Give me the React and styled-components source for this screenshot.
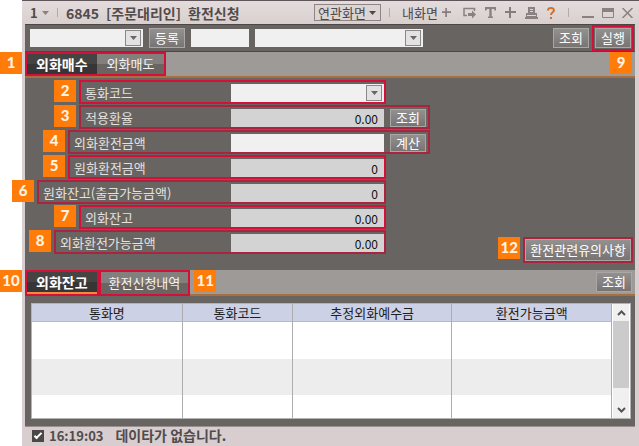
import React from "react";
import styled, { createGlobalStyle, css } from "styled-components";

const RED = "#d40f38";
const DEEP_RED = "#a8243f";
const PANEL = "#686462";
const FONT = '"Noto Sans CJK KR", "Noto Sans", sans-serif';

const GlobalStyle = createGlobalStyle`
  *, *::before, *::after { box-sizing: border-box; }
  body { margin: 0; background: #fff; font-family: ${FONT}; font-size: 13px; line-height: 16px; }
  button, input, select { font: inherit; margin: 0; border-radius: 0; }
`;

const Page = styled.div`
  padding-left: 22px;
`;

const Window = styled.main`
  background: #d8cecf;
  border-top: 1px solid #5f5558;
`;

const TitleBar = styled.header`
  display: flex;
  align-items: center;
  height: 23px;
  padding: 0 6px 0 8px;
  color: #524b4c;
  background: linear-gradient(#e4dcdc, #d9cfcf);
`;

const TitleNumber = styled.span`
  font-weight: 700;
  width: 12px;
`;

const Title = styled.h1`
  display: flex;
  gap: 7px;
  margin: 0;
  font-size: 14px;
  line-height: 20px;
  font-weight: 700;
  white-space: nowrap;
`;

const Divider = styled.span`
  width: 1px;
  height: 9px;
  margin: 0 ${(p) => p.$gap || 8}px;
  background: #b5abac;
`;

const Tools = styled.div`
  display: flex;
  align-items: center;
  margin-left: auto;
`;

const ToolGroup = styled.div`
  display: flex;
  align-items: center;
  gap: ${(p) => p.$gap}px;
`;

const PlainButton = styled.button`
  display: flex;
  align-items: center;
  gap: 4px;
  padding: 0;
  border: 0;
  background: none;
  color: #8b8182;
`;

const TextTool = styled(PlainButton)`
  margin-left: 4px;
  margin-right: 12px;
  color: #4f4849;
  white-space: nowrap;
`;

const RelatedButton = styled(PlainButton)`
  height: 17px;
  width: 67px;
  padding: 0 3px;
  gap: 3px;
  line-height: 14px;
  border: 1px solid #8d8586;
  color: #4f4849;
  background: #dcd5d4;
  white-space: nowrap;
`;

const Body = styled.div`
  margin: 0 4px 0 3px;
  background: ${PANEL};
  border-bottom: 1px solid #9a9090;
`;

const Toolbar = styled.div`
  display: flex;
  align-items: center;
  gap: 6px;
  height: 28px;
  padding: 0 1px 0 5px;
  border-top: 1px solid #4b4746;
  border-bottom: 1px solid #4b4746;
`;

const Spacer = styled.div`
  flex: 1;
`;

const textBox = css`
  width: ${(p) => p.$width}px;
  height: 18px;
  padding: 0 6px;
  border: 0;
  outline: 0;
  background: ${(p) => (p.readOnly ? "#d3d3d3" : "#f0f0f0")};
  color: #111;
`;

const TextInput = styled.input`
  ${textBox}
  text-align: right;
  font-size: 12px;
`;

const SelectWrap = styled.span`
  display: flex;
  position: relative;
  width: ${(p) => p.$width}px;
`;

const NativeSelect = styled.select`
  ${textBox}
  width: 100%;
  appearance: none;
`;

const Arrow = styled.span`
  position: absolute;
  top: 1px;
  right: 2px;
  display: grid;
  place-items: center;
  width: 16px;
  height: 16px;
  border: 1px solid #8a8888;
  background: #e3e1e1;
  color: #666;
  pointer-events: none;
`;

const ActionButton = styled.button`
  height: ${(p) => p.$height || 20}px;
  padding: 0 5px;
  line-height: 16px;
  color: #fff;
  background: linear-gradient(#939090, #777473);
  border: 1px solid #aaa6a5;
  white-space: nowrap;
`;

const SmallButton = styled(ActionButton)`
  width: 36px;
`;

const Marked = styled.div`
  position: relative;
  display: flex;
  border: 2px solid ${(p) => (p.$deep ? DEEP_RED : RED)};
  padding: ${(p) => p.$pad || 0}px;
`;

const Badge = styled.span`
  flex: none;
  width: 22px;
  height: 22px;
  background: #ff7b0a;
  color: #fff3e2;
  font: 900 15px/21px Lato, sans-serif;
  text-align: center;
`;

const SideBadge = styled(Badge)`
  position: absolute;
  top: 0;
  right: 100%;
  margin: -2px 5px 0 0;
`;

const TabBar = styled.div`
  display: flex;
  align-items: center;
  height: 26px;
  padding-right: 3px;
  background: #9e9a98;
  border-bottom: 2px solid #a96f3f;
`;

const TabFrame = styled(Marked)`
  align-self: flex-start;
`;

const Tab = styled.button`
  height: ${(p) => p.$height}px;
  padding: 0 ${(p) => p.$side}px;
  border: 0;
  color: #f5f3f2;
  line-height: 18px;
  white-space: nowrap;
  background: linear-gradient(#827f7d 0 50%, #686563 50%);
  ${(p) =>
    p["aria-selected"] &&
    css`
      color: #fff;
      font-size: 14px;
      font-weight: 700;
      background: linear-gradient(#464443 0 50%, #373535 50%);
      border-bottom: ${p.$line ? "2px solid #f38a3a" : "0"};
    `}
`;

const TabBarBadge = styled(Badge)`
  margin: 0 0 2px 4px;
`;

const Form = styled.form`
  display: flex;
  align-items: flex-end;
  justify-content: space-between;
  padding: 2px 2px 7px 0;
`;

const Fields = styled.div`
  display: flex;
  flex-direction: column;
  align-items: flex-start;
  gap: 1px;
  padding-bottom: 9px;
`;

const FieldRow = styled(Marked)`
  align-items: center;
  height: 24px;
  margin-left: ${(p) => p.$indent}px;
  padding: ${(p) => (p.$button ? "2px 2px 0 4px" : "2px 0 0 4px")};
`;

const FieldLabel = styled.label`
  width: ${(p) => 200 - p.$indent}px;
  color: #e4e1df;
  line-height: 18px;
  white-space: nowrap;
`;

const FieldAction = styled(SmallButton)`
  margin-left: 6px;
`;

const NoticeButton = styled(ActionButton)`
  padding: 0 4px;
`;

const GridPanel = styled.div`
  padding: 7px 4px 7px 6px;
`;

const GridBox = styled.div`
  display: flex;
  background: #fff;
  border: 1px solid #b4b2b2;
`;

const Table = styled.table`
  flex: 1;
  table-layout: fixed;
  border-collapse: separate;
  border-spacing: 0;
`;

const HeadCell = styled.th`
  width: ${(p) => p.$width};
  height: 18px;
  padding: 0;
  font-weight: 400;
  line-height: 17px;
  color: #1d1d22;
  background: #cdd1e6;
  border-right: 1px solid #adacae;
  border-bottom: 1px solid #b8b8c0;
`;

const Cell = styled.td`
  height: ${(p) => p.$height}px;
  padding: 0;
  background: ${(p) => (p.$shade ? "#ededed" : "#fff")};
  border-right: 1px solid #adacae;
`;

const ScrollBar = styled.div`
  display: flex;
  flex-direction: column;
  align-items: stretch;
  width: 18px;
  padding: 0 1px;
  color: #555;
`;

const ScrollButton = styled.button`
  display: grid;
  place-items: center;
  height: 17px;
  padding: 0;
  border: 0;
  background: #f0f0f0;
  color: inherit;
`;

const Thumb = styled.div`
  flex: 1;
  background: #cbcbcb;
`;

const Track = styled.div`
  height: 13px;
  background: #f0f0f0;
`;

const Status = styled.footer`
  padding: 0 10px;
  height: 20px;
`;

const StatusLabel = styled.label`
  display: flex;
  align-items: center;
  gap: 5px;
  font-size: 13px;
  line-height: 17px;
  font-weight: 700;
  color: #524b4b;
`;

const Message = styled.span`
  margin-left: 7px;
  font-size: 14px;
`;

const Check = styled.input`
  appearance: none;
  width: 12px;
  height: 12px;
  background: #4c4848;
  display: grid;
  place-items: center;
  &:checked::after {
    content: "";
    width: 8px;
    height: 4px;
    margin-bottom: 2px;
    border: solid #fff;
    border-width: 0 0 2px 2px;
    transform: rotate(-45deg);
  }
`;

const Caret = () => (
  <svg width="7" height="4" viewBox="0 0 7 4" aria-hidden="true">
    <path d="M0 0h7L3.5 4z" fill="currentColor" />
  </svg>
);

const Chevron = ({ down }) => (
  <svg width="9" height="6" viewBox="0 0 9 6" aria-hidden="true">
    <path d={down ? "M1 1l3.500 3.500L8 1" : "M1 5l3.500-3.500L8 5"} fill="none" stroke="currentColor" strokeWidth="2" />
  </svg>
);

const Plus = ({ size = 11 }) => (
  <svg width={size} height={size} viewBox="0 0 11 11" aria-hidden="true">
    <path d="M5 0v11M0 5h11" stroke="#857c7d" strokeWidth="2" />
  </svg>
);

const glyphs = {
  "화면 내보내기": (
    <svg width="13" height="12" viewBox="0 0 13 12">
      <path d="M4 8.500H1v-7h10.500V4" fill="none" stroke="currentColor" strokeWidth="1.500" />
      <path d="M5 6h4V3.500l4 4-4 4V9H5z" fill="currentColor" />
    </svg>
  ),
  글꼴: (
    <svg width="11" height="11" viewBox="0 0 11 11">
      <path d="M0 0h11v3.500H9.500L9 2H6.700v7.500H8V11H3V9.500h1.300V2H2L1.500 3.500H0z" fill="currentColor" />
    </svg>
  ),
  추가: <Plus />,
  인쇄: (
    <svg width="13" height="12" viewBox="0 0 13 12">
      <path d="M3 0h7v6h2v4h1v2H0v-2h1V6h2z" fill="currentColor" />
      <path d="M5 2.500h3M5 4.500h3M2 8.500h9" stroke="#ded5d5" fill="none" />
    </svg>
  ),
  도움말: (
    <svg width="8" height="12" viewBox="0 0 8 12">
      <path d="M1 3.500V2.500Q1.500 1 4 1t3 2.200c0 2-3 2.300-3 4.800" fill="none" stroke="#d4702c" strokeWidth="2" />
      <path d="M3 10h2v2H3z" fill="#d4702c" />
    </svg>
  ),
};

const windowGlyphs = {
  최소화: (
    <svg width="12" height="11" viewBox="0 0 12 11">
      <path d="M0 10h12" stroke="currentColor" strokeWidth="2" />
    </svg>
  ),
  최대화: (
    <svg width="12" height="10" viewBox="0 0 12 10">
      <path d="M.5 .5h11v9H.5z" fill="none" stroke="currentColor" />
      <path d="M0 0h12v4H0z" fill="currentColor" />
    </svg>
  ),
  닫기: (
    <svg width="11" height="10" viewBox="0 0 11 10">
      <path d="M.5 0l10 10M10.500 0l-10 10" stroke="currentColor" strokeWidth="1.500" />
    </svg>
  ),
};

function Select({ id, width, label }) {
  return (
    <SelectWrap $width={width}>
      <NativeSelect id={id} aria-label={label}>
        <option />
      </NativeSelect>
      <Arrow><Caret /></Arrow>
    </SelectWrap>
  );
}

const fields = [
  { n: 2, label: "통화코드", indent: 54, type: "select" },
  { n: 3, label: "적용환율", indent: 54, value: "0.00", button: "조회", deep: true },
  { n: 4, label: "외화환전금액", indent: 43, button: "계산", deep: true },
  { n: 5, label: "원화환전금액", indent: 43, value: "0" },
  { n: 6, label: "원화잔고(출금가능금액)", indent: 12, value: "0", deep: true },
  { n: 7, label: "외화잔고", indent: 54, value: "0.00" },
  { n: 8, label: "외화환전가능금액", indent: 29, value: "0.00", deep: true },
];

const columns = [
  ["통화명", "26%"],
  ["통화코드", "19%"],
  ["추정외화예수금", "27.500%"],
  ["환전가능금액", "27.500%"],
];

const rows = [
  { height: 37 },
  { height: 36, shade: true },
  { height: 23 },
];

export default function App() {
  return (
    <Page>
      <GlobalStyle />
      <Window>
        <TitleBar>
          <TitleNumber>1</TitleNumber>
          <PlainButton type="button" aria-label="화면 목록"><Caret /></PlainButton>
          <Divider />
          <Title>
            <span>6845</span>
            <span>[주문대리인]</span>
            <span>환전신청</span>
          </Title>
          <Tools>
            <RelatedButton type="button">연관화면<Caret /></RelatedButton>
            <Divider />
            <TextTool type="button">내화면<Plus size={9} /></TextTool>
            <ToolGroup $gap={9}>
              {Object.entries(glyphs).map(([name, icon]) => (
                <PlainButton key={name} type="button" aria-label={name}>{icon}</PlainButton>
              ))}
            </ToolGroup>
            <Divider $gap={13} />
            <ToolGroup $gap={8}>
              {Object.entries(windowGlyphs).map(([name, icon]) => (
                <PlainButton key={name} type="button" aria-label={name}>{icon}</PlainButton>
              ))}
            </ToolGroup>
          </Tools>
        </TitleBar>

        <Body>
          <Toolbar>
            <Select width={113} label="계좌" />
            <SmallButton type="button">등록</SmallButton>
            <TextInput $width={58} aria-label="비밀번호" />
            <Select width={168} label="계좌명" />
            <Spacer />
            <ToolGroup $gap={3}>
              <SmallButton type="button">조회</SmallButton>
              <Marked $pad={1}>
                <SmallButton type="button">실행</SmallButton>
              </Marked>
            </ToolGroup>
          </Toolbar>

          <TabBar>
            <TabFrame role="tablist">
              <SideBadge>1</SideBadge>
              <Tab type="button" role="tab" aria-selected={true} $height={20} $side={9}>외화매수</Tab>
              <Tab type="button" role="tab" aria-selected={false} $height={20} $side={10}>외화매도</Tab>
            </TabFrame>
            <Spacer />
            <TabBarBadge>9</TabBarBadge>
          </TabBar>

          <Form onSubmit={(e) => e.preventDefault()}>
            <Fields>
              {fields.map((f) => (
                <FieldRow key={f.n} $indent={f.indent} $deep={f.deep} $button={f.button}>
                  <SideBadge>{f.n}</SideBadge>
                  <FieldLabel htmlFor={`field-${f.n}`} $indent={f.indent}>{f.label}</FieldLabel>
                  {f.type === "select" ? (
                    <Select id={`field-${f.n}`} width={153} />
                  ) : (
                    <TextInput
                      id={`field-${f.n}`}
                      $width={153}
                      readOnly={f.value !== undefined}
                      defaultValue={f.value}
                    />
                  )}
                  {f.button && <FieldAction type="button" $height={18}>{f.button}</FieldAction>}
                </FieldRow>
              ))}
            </Fields>
            <Marked $deep>
              <SideBadge>12</SideBadge>
              <NoticeButton type="button" $height={22}>환전관련유의사항</NoticeButton>
            </Marked>
          </Form>

          <TabBar role="tablist">
            <TabFrame>
              <SideBadge>10</SideBadge>
              <Tab type="button" role="tab" aria-selected={true} $height={22} $side={9} $line>외화잔고</Tab>
            </TabFrame>
            <TabFrame>
              <Tab type="button" role="tab" aria-selected={false} $height={22} $side={8}>환전신청내역</Tab>
            </TabFrame>
            <TabBarBadge>11</TabBarBadge>
            <Spacer />
            <SmallButton type="button">조회</SmallButton>
          </TabBar>

          <GridPanel>
            <GridBox>
              <Table>
                <thead>
                  <tr>
                    {columns.map(([name, width]) => (
                      <HeadCell key={name} scope="col" $width={width}>{name}</HeadCell>
                    ))}
                  </tr>
                </thead>
                <tbody>
                  {rows.map((row) => (
                    <tr key={row.height}>
                      {columns.map(([name]) => (
                        <Cell key={name} $height={row.height} $shade={row.shade} />
                      ))}
                    </tr>
                  ))}
                </tbody>
              </Table>
              <ScrollBar>
                <ScrollButton type="button" aria-label="위로"><Chevron /></ScrollButton>
                <Thumb />
                <Track />
                <ScrollButton type="button" aria-label="아래로"><Chevron down /></ScrollButton>
              </ScrollBar>
            </GridBox>
          </GridPanel>
        </Body>

        <Status>
          <StatusLabel>
            <Check type="checkbox" defaultChecked />
            <span>16:19:03</span>
            <Message>데이타가 없습니다.</Message>
          </StatusLabel>
        </Status>
      </Window>
    </Page>
  );
}
